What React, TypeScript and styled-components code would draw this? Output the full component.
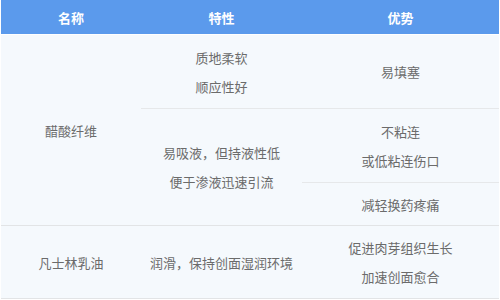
import React from 'react'
import styled, { createGlobalStyle } from 'styled-components'

const GlobalStyle = createGlobalStyle`
  html, body {
    margin: 0;
    padding: 0;
    background: #ffffff;
  }
  body {
    font-family: "Noto Sans CJK SC", "Noto Sans", sans-serif;
  }
`

type Group = {
  name: string
  height: number
  features: { lines: string[]; height: number }[]
  advantages: { lines: string[]; height: number }[]
}

const groups: Group[] = [
  {
    name: '醋酸纤维',
    height: 190,
    features: [
      { lines: ['质地柔软', '顺应性好'], height: 73 },
      { lines: ['易吸液，但持液性低', '便于渗液迅速引流'], height: 116 },
    ],
    advantages: [
      { lines: ['易填塞'], height: 73 },
      { lines: ['不粘连', '或低粘连伤口'], height: 73 },
      { lines: ['减轻换药疼痛'], height: 42 },
    ],
  },
  {
    name: '凡士林乳油',
    height: 72,
    features: [{ lines: ['润滑，保持创面湿润环境'], height: 72 }],
    advantages: [{ lines: ['促进肉芽组织生长', '加速创面愈合'], height: 72 }],
  },
]

function App() {
  return (
    <Page>
      <GlobalStyle />
      <Table>
        <HeaderRow>
          <HeadCell>名称</HeadCell>
          <HeadCell>特性</HeadCell>
          <HeadCell>优势</HeadCell>
        </HeaderRow>
        {groups.map((g, i) => (
          <GroupRow key={i} $height={g.height}>
            <NameCell>{g.name}</NameCell>
            <SubColumn>
              {g.features.map((f, j) => (
                <SubCell key={j} $height={f.height} $divider={j < g.features.length - 1}>
                  {f.lines.map((l, k) => (
                    <Line key={k}>{l}</Line>
                  ))}
                </SubCell>
              ))}
            </SubColumn>
            <SubColumn>
              {g.advantages.map((a, j) => (
                <SubCell key={j} $height={a.height} $divider={j < g.advantages.length - 1}>
                  {a.lines.map((l, k) => (
                    <Line key={k}>{l}</Line>
                  ))}
                </SubCell>
              ))}
            </SubColumn>
          </GroupRow>
        ))}
      </Table>
    </Page>
  )
}

export default App

const Page = styled.div`
  width: 500px;
  height: 300px;
  overflow: hidden;
  background: #ffffff;
`

const Table = styled.div`
  margin: 0 1px;
  display: flex;
  flex-direction: column;
  background: #f5f9fd;
`

const HeaderRow = styled.div`
  display: grid;
  grid-template-columns: 140px 161px 1fr;
  height: 34px;
  background: #5b9aec;
  border-bottom: 1px solid #ffffff;
`

const HeadCell = styled.div`
  display: flex;
  align-items: center;
  justify-content: center;
  color: #ffffff;
  font-size: 13px;
  font-weight: 700;
`

const GroupRow = styled.div<{ $height: number }>`
  display: grid;
  grid-template-columns: 140px 161px 1fr;
  height: ${(p) => p.$height}px;
  border-bottom: 1px solid #e2e4e6;
`

const NameCell = styled.div`
  display: flex;
  align-items: center;
  justify-content: center;
  color: #6b6b6b;
  font-size: 13px;
`

const SubColumn = styled.div`
  display: flex;
  flex-direction: column;
`

const SubCell = styled.div<{ $height: number; $divider: boolean }>`
  height: ${(p) => p.$height}px;
  display: flex;
  flex-direction: column;
  align-items: center;
  justify-content: center;
  border-bottom: ${(p) => (p.$divider ? '1px solid #e6e8ea' : 'none')};
`

const Line = styled.div`
  color: #6b6b6b;
  font-size: 13px;
  line-height: 29px;
  white-space: nowrap;
`
